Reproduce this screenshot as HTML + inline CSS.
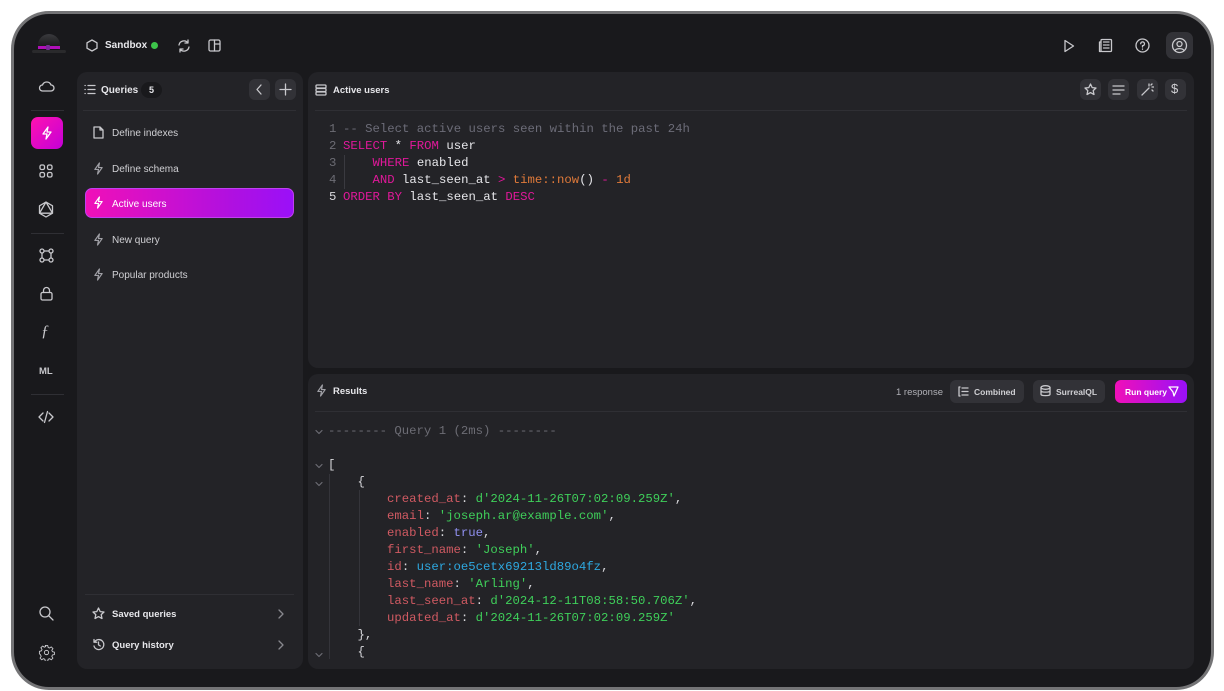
<!DOCTYPE html>
<html><head><meta charset="utf-8"><style>
*{box-sizing:border-box;margin:0;padding:0}
body{width:1224px;height:691px;background:#fff;font-family:"Liberation Sans",sans-serif;position:relative;overflow:hidden;color:#e6e6ea}
.frame{position:absolute;left:11px;top:11px;width:1203px;height:679px;border-radius:38px;background:#747476;}
.inner{position:absolute;left:14px;top:14px;width:1197px;height:673px;border-radius:35px;background:#19191c;overflow:hidden}
.abs{position:absolute}
.panel{position:absolute;background:#232327;border-radius:10px}
svg{position:absolute;fill:none;stroke:#c8c8cc;stroke-width:1.3;stroke-linecap:round;stroke-linejoin:round}
.t{position:absolute;font-size:10px;white-space:nowrap}
.mono{font-family:"Liberation Mono",monospace;font-size:12.3px;position:absolute;white-space:pre;line-height:17px}
.k{color:#e0189a}.c{color:#6c6c78}.n{color:#6c6c74}.o{color:#e07a3a}
.r{color:#d05a62}.g{color:#3fcf5a}.p{color:#9090f0}.b{color:#2ea8e0}
.btn{position:absolute;background:#323237;border-radius:6px}
.hr{position:absolute;height:1px;background:#2f2f34}
.chev{stroke:#6c6c74;stroke-width:1.2}
</style></head><body>
<div class="frame"></div>
<div class="inner"></div>

<!-- hat logo -->
<div class="abs" style="left:38px;top:34px;width:22px;height:16px;background:linear-gradient(180deg,#3a3a3e,#111);border-radius:11px 11px 3px 3px"></div>
<div class="abs" style="left:38px;top:46px;width:22px;height:3px;background:#b010b8"></div>
<div class="abs" style="left:46px;top:45px;width:4px;height:5px;background:#7a2a9a;border-radius:1px"></div>
<div class="abs" style="left:32px;top:50px;width:34px;height:3px;background:#2a2a2c;border-radius:2px"></div>

<!-- top bar -->
<svg style="left:86px;top:39px" width="12" height="13" viewBox="0 0 12 13"><path d="M6 1L11 3.8V9.2L6 12L1 9.2V3.8Z"/></svg>
<div class="t" style="left:105px;top:40px;font-weight:bold;color:#e8e8ec">Sandbox</div>
<div class="abs" style="left:151px;top:42px;width:7px;height:7px;border-radius:50%;background:#3dc44a"></div>
<svg style="left:177px;top:39px" width="14" height="14" viewBox="0 0 14 14"><path d="M2 6A5 5 0 0 1 11 4M12 8A5 5 0 0 1 3 10M11 1V4H8M3 13V10H6"/></svg>
<svg style="left:208px;top:39px" width="13" height="13" viewBox="0 0 13 13"><rect x="1" y="1" width="11" height="11" rx="1.5"/><path d="M6.5 1V12M6.5 5H12"/></svg>
<svg style="left:1063px;top:39px" width="12" height="14" viewBox="0 0 12 14"><path d="M2 1.5L10.5 7L2 12.5Z"/></svg>
<svg style="left:1098px;top:38px" width="15" height="15" viewBox="0 0 15 15"><rect x="3" y="1.5" width="10.5" height="12" rx="1"/><path d="M3 4H1.5V13.5H3M5.5 4H11M5.5 7H8M5.5 10H11M9 7H11"/></svg>
<svg style="left:1135px;top:38px" width="15" height="15" viewBox="0 0 15 15"><circle cx="7.5" cy="7.5" r="6.5"/><path d="M5.7 5.7A1.9 1.9 0 1 1 7.5 7.7V9M7.5 11V11.2"/></svg>
<div class="btn" style="left:1166px;top:32px;width:27px;height:27px;border-radius:7px"></div>
<svg style="left:1171px;top:37px" width="17" height="17" viewBox="0 0 17 17"><circle cx="8.5" cy="8.5" r="7"/><circle cx="8.5" cy="7" r="2.5"/><path d="M4 13.5C5.5 11 11.5 11 13 13.5"/></svg>

<!-- left rail -->
<svg style="left:38px;top:80px" width="17" height="12" viewBox="0 0 17 12"><path d="M4.5 11H13A3 3 0 0 0 13 5A4.5 4.5 0 0 0 4.5 5A3 3 0 0 0 4.5 11Z"/></svg>
<div class="hr" style="left:31px;top:110px;width:33px"></div>
<div class="abs" style="left:31px;top:117px;width:32px;height:32px;border-radius:7px;background:linear-gradient(135deg,#ff12b0,#c400d8)"></div>
<svg style="left:41px;top:126px;stroke:#fff" width="12" height="14" viewBox="0 0 12 14"><path d="M7 1L2 8H6L5 13L10 6H6Z"/></svg>
<svg style="left:39px;top:164px" width="14" height="14" viewBox="0 0 14 14"><rect x="1" y="1" width="4.5" height="4.5" rx="1.5"/><rect x="8.5" y="1" width="4.5" height="4.5" rx="1.5"/><rect x="1" y="8.5" width="4.5" height="4.5" rx="1.5"/><rect x="8.5" y="8.5" width="4.5" height="4.5" rx="1.5"/></svg>
<svg style="left:38px;top:201px" width="16" height="17" viewBox="0 0 16 17"><path d="M8 1L14.5 4.8V12.2L8 16L1.5 12.2V4.8ZM8 1L14.5 12.2H1.5Z"/></svg>
<div class="hr" style="left:31px;top:233px;width:33px"></div>
<svg style="left:39px;top:248px" width="15" height="15" viewBox="0 0 15 15"><circle cx="3" cy="3" r="2"/><circle cx="12" cy="3" r="2"/><circle cx="3" cy="12" r="2"/><circle cx="12" cy="12" r="2"/><path d="M5 3H10M5 12H10M3 5V10M12 5V10"/></svg>
<svg style="left:40px;top:286px" width="13" height="15" viewBox="0 0 13 15"><rect x="1" y="6.5" width="11" height="7.5" rx="1.5"/><path d="M3.5 6.5V4.5A3 3 0 0 1 9.5 4.5V6.5"/></svg>
<div class="t" style="left:41px;top:323px;font-size:16px;font-style:italic;color:#c8c8cc;font-family:'Liberation Serif',serif">ƒ</div>
<div class="t" style="left:39px;top:366px;font-weight:bold;font-size:9.5px;color:#c8c8cc">ML</div>
<div class="hr" style="left:31px;top:394px;width:33px"></div>
<svg style="left:38px;top:410px" width="16" height="14" viewBox="0 0 16 14"><path d="M5 3L1 7L5 11M11 3L15 7L11 11M9.5 1.5L6.5 12.5"/></svg>
<svg style="left:39px;top:606px" width="15" height="15" viewBox="0 0 15 15"><circle cx="6" cy="6" r="5"/><path d="M9.8 9.8L14 14"/></svg>
<svg style="left:38px;top:644px" width="17" height="17" viewBox="0 0 24 24"><circle cx="12" cy="12" r="3"/><path d="M10.3 2h3.4l.6 2.8 2 .9 2.4-1.6 2.4 2.4-1.6 2.4.9 2 2.8.6v3.4l-2.8.6-.9 2 1.6 2.4-2.4 2.4-2.4-1.6-2 .9-.6 2.8h-3.4l-.6-2.8-2-.9-2.4 1.6-2.4-2.4 1.6-2.4-.9-2L2 13.7v-3.4l2.8-.6.9-2-1.6-2.4 2.4-2.4 2.4 1.6 2-.9z"/></svg>

<!-- queries panel -->
<div class="panel" style="left:77px;top:72px;width:226px;height:597px"></div>
<svg style="left:84px;top:84px" width="12" height="11" viewBox="0 0 12 11"><path d="M1 1.5H1.2M4 1.5H11M1 5.5H1.2M4 5.5H11M1 9.5H1.2M4 9.5H11"/></svg>
<div class="t" style="left:101px;top:85px;font-weight:bold">Queries</div>
<div class="abs" style="left:141px;top:82px;width:21px;height:16px;border-radius:8px;background:#19191c;font-size:9px;text-align:center;line-height:16px;font-weight:bold">5</div>
<div class="btn" style="left:249px;top:79px;width:21px;height:21px"></div>
<svg style="left:255px;top:84px" width="8" height="11" viewBox="0 0 8 11"><path d="M6 1L2 5.5L6 10"/></svg>
<div class="btn" style="left:275px;top:79px;width:21px;height:21px"></div>
<svg style="left:279px;top:83px" width="13" height="13" viewBox="0 0 13 13"><path d="M6.5 1V12M1 6.5H12"/></svg>
<div class="hr" style="left:83px;top:110px;width:213px"></div>
<svg style="left:93px;top:126px" width="11" height="13" viewBox="0 0 11 13"><path d="M1 1H7L10 4V12H1ZM7 1V4H10"/></svg>
<div class="t" style="left:112px;top:128px;color:#d0d0d4">Define indexes</div>
<svg style="left:93px;top:162px;stroke:#a0a0a6" width="11" height="13" viewBox="0 0 12 14"><path d="M7 1L2 8H6L5 13L10 6H6Z"/></svg>
<div class="t" style="left:112px;top:164px;color:#d0d0d4">Define schema</div>
<div class="abs" style="left:85px;top:188px;width:209px;height:30px;border-radius:7px;background:linear-gradient(90deg,#f010b8,#b010e0 70%,#9a10f8);border:1px solid #c040f0"></div>
<svg style="left:93px;top:196px;stroke:#fff" width="11" height="13" viewBox="0 0 12 14"><path d="M7 1L2 8H6L5 13L10 6H6Z"/></svg>
<div class="t" style="left:112px;top:199px;color:#fff">Active users</div>
<svg style="left:93px;top:233px;stroke:#a0a0a6" width="11" height="13" viewBox="0 0 12 14"><path d="M7 1L2 8H6L5 13L10 6H6Z"/></svg>
<div class="t" style="left:112px;top:235px;color:#d0d0d4">New query</div>
<svg style="left:93px;top:268px;stroke:#a0a0a6" width="11" height="13" viewBox="0 0 12 14"><path d="M7 1L2 8H6L5 13L10 6H6Z"/></svg>
<div class="t" style="left:112px;top:270px;color:#d0d0d4">Popular products</div>
<div class="hr" style="left:85px;top:594px;width:209px"></div>
<svg style="left:92px;top:607px" width="13" height="13" viewBox="0 0 13 13"><path d="M6.5 1L8.2 4.6L12 5L9.2 7.6L10 11.5L6.5 9.6L3 11.5L3.8 7.6L1 5L4.8 4.6Z"/></svg>
<div class="t" style="left:112px;top:609px;font-weight:bold;font-size:9.5px">Saved queries</div>
<svg style="left:278px;top:609px;stroke:#88888e" width="6" height="10" viewBox="0 0 6 10"><path d="M1 1L5 5L1 9"/></svg>
<svg style="left:92px;top:638px" width="13" height="13" viewBox="0 0 13 13"><path d="M2.5 4A5 5 0 1 1 2 8M2 1.5V4.2H4.7M6.5 4V6.8L8.3 8"/></svg>
<div class="t" style="left:112px;top:640px;font-weight:bold;font-size:9.5px">Query history</div>
<svg style="left:278px;top:640px;stroke:#88888e" width="6" height="10" viewBox="0 0 6 10"><path d="M1 1L5 5L1 9"/></svg>

<!-- editor panel -->
<div class="panel" style="left:308px;top:72px;width:886px;height:296px"></div>
<svg style="left:315px;top:84px" width="12" height="12" viewBox="0 0 12 12"><rect x="1" y="1" width="10" height="3" rx="1"/><rect x="1" y="4.5" width="10" height="3" rx="1"/><rect x="1" y="8" width="10" height="3" rx="1"/></svg>
<div class="t" style="left:333px;top:85px;font-weight:bold;font-size:9.5px">Active users</div>
<div class="btn" style="left:1080px;top:79px;width:21px;height:21px"></div>
<svg style="left:1084px;top:83px" width="13" height="13" viewBox="0 0 13 13"><path d="M6.5 1L8.2 4.6L12 5L9.2 7.6L10 11.5L6.5 9.6L3 11.5L3.8 7.6L1 5L4.8 4.6Z"/></svg>
<div class="btn" style="left:1108px;top:79px;width:21px;height:21px"></div>
<svg style="left:1112px;top:85px" width="13" height="10" viewBox="0 0 13 10"><path d="M1 1H12M1 5H12M1 9H8"/></svg>
<div class="btn" style="left:1137px;top:79px;width:21px;height:21px"></div>
<svg style="left:1141px;top:83px" width="13" height="13" viewBox="0 0 13 13"><path d="M1 12L8 5M8 1V3M11 4H13M10 2L11 1M11 7L12 8"/></svg>
<div class="btn" style="left:1165px;top:79px;width:21px;height:21px"></div>
<div class="t" style="left:1171px;top:81px;font-size:13px;color:#d0d0d4">$</div>
<div class="hr" style="left:315px;top:110px;width:872px"></div>
<div class="mono" style="left:329px;top:121px;color:#6c6c74">1
2
3
4
<span style="color:#d8d8dc">5</span></div>
<div class="abs" style="left:344px;top:155px;width:1px;height:34px;background:#3a3a40"></div>
<div class="mono" style="left:343px;top:121px;color:#e6e6ea"><span class="c">-- Select active users seen within the past 24h</span>
<span class="k">SELECT</span> * <span class="k">FROM</span> user
    <span class="k">WHERE</span> enabled
    <span class="k">AND</span> last_seen_at <span class="k">&gt;</span> <span class="o">time::now</span>() <span class="k">-</span> <span class="o">1d</span>
<span class="k">ORDER BY</span> last_seen_at <span class="k">DESC</span></div>

<!-- results panel -->
<div class="panel" style="left:308px;top:374px;width:886px;height:295px"></div>
<svg style="left:316px;top:384px;stroke:#a0a0a6" width="11" height="13" viewBox="0 0 12 14"><path d="M7 1L2 8H6L5 13L10 6H6Z"/></svg>
<div class="t" style="left:333px;top:386px;font-weight:bold;font-size:9.5px">Results</div>
<div class="t" style="left:896px;top:387px;color:#b0b0b6;font-size:9.5px">1 response</div>
<div class="btn" style="left:950px;top:380px;width:74px;height:23px"></div>
<svg style="left:958px;top:386px" width="11" height="11" viewBox="0 0 11 11"><path d="M1 1V10M1 1H2M1 10H2M4 2H10M4 5.5H10M4 9H10"/></svg>
<div class="t" style="left:974px;top:387px;font-size:8.5px;font-weight:bold;color:#d0d0d4">Combined</div>
<div class="btn" style="left:1033px;top:380px;width:72px;height:23px"></div>
<svg style="left:1040px;top:385px" width="11" height="12" viewBox="0 0 11 12"><ellipse cx="5.5" cy="2.5" rx="4.5" ry="1.8"/><path d="M1 2.5V9.5C1 11 10 11 10 9.5V2.5M1 6C1 7.5 10 7.5 10 6"/></svg>
<div class="t" style="left:1056px;top:387px;font-size:8.5px;font-weight:bold;color:#d0d0d4">SurrealQL</div>
<div class="abs" style="left:1115px;top:380px;width:72px;height:23px;border-radius:6px;background:linear-gradient(90deg,#f010b8,#9a10f8)"></div>
<div class="t" style="left:1125px;top:387px;font-size:8.5px;font-weight:bold;color:#fff">Run query</div>
<svg style="left:1168px;top:386px;stroke:#fff" width="11" height="11" viewBox="0 0 11 11"><path d="M1 1H10L6 10L5 6Z"/></svg>
<div class="hr" style="left:315px;top:411px;width:872px"></div>
<svg class="chev" style="left:315px;top:429px" width="8" height="6" viewBox="0 0 8 6"><path d="M1 1.5L4 4.5L7 1.5"/></svg>
<svg class="chev" style="left:315px;top:463px" width="8" height="6" viewBox="0 0 8 6"><path d="M1 1.5L4 4.5L7 1.5"/></svg>
<svg class="chev" style="left:315px;top:481px" width="8" height="6" viewBox="0 0 8 6"><path d="M1 1.5L4 4.5L7 1.5"/></svg>
<svg class="chev" style="left:315px;top:652px" width="8" height="6" viewBox="0 0 8 6"><path d="M1 1.5L4 4.5L7 1.5"/></svg>
<div class="abs" style="left:329px;top:474px;width:1px;height:185px;background:#34343a"></div>
<div class="abs" style="left:359px;top:490px;width:1px;height:136px;background:#34343a"></div>
<div class="mono" style="left:328px;top:423px;color:#d8d8dc"><span class="n">-------- Query 1 (2ms) --------</span>

[
    {
        <span class="r">created_at</span>: <span class="g">d'2024-11-26T07:02:09.259Z'</span>,
        <span class="r">email</span>: <span class="g">'joseph.ar@example.com'</span>,
        <span class="r">enabled</span>: <span class="p">true</span>,
        <span class="r">first_name</span>: <span class="g">'Joseph'</span>,
        <span class="r">id</span>: <span class="b">user:oe5cetx69213ld89o4fz</span>,
        <span class="r">last_name</span>: <span class="g">'Arling'</span>,
        <span class="r">last_seen_at</span>: <span class="g">d'2024-12-11T08:58:50.706Z'</span>,
        <span class="r">updated_at</span>: <span class="g">d'2024-11-26T07:02:09.259Z'</span>
    },
    {</div>
</body></html>
